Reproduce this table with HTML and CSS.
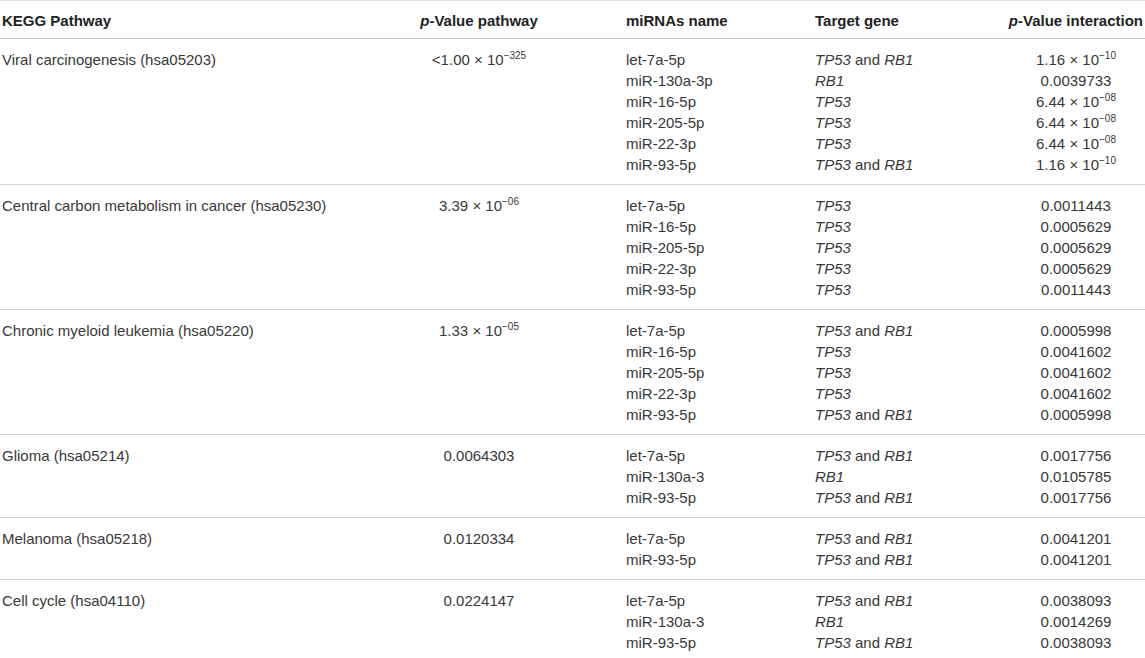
FILE: index.html
```html
<!DOCTYPE html>
<html>
<head>
<meta charset="utf-8">
<link rel="stylesheet" href="styles.css">
</head>
<body>
<table class="kegg">
  <colgroup>
    <col class="c1"><col class="c2"><col class="c3"><col class="c4"><col class="c5">
  </colgroup>
  <thead>
    <tr>
      <th class="left">KEGG Pathway</th>
      <th class="center"><i>p</i>-Value pathway</th>
      <th class="left">miRNAs name</th>
      <th class="left">Target gene</th>
      <th class="right"><i>p</i>-Value interaction</th>
    </tr>
  </thead>
  <tbody>
    <tr>
      <td>Viral carcinogenesis (hsa05203)</td>
      <td class="center">&lt;1.00 × 10<sup>−325</sup></td>
      <td>let-7a-5p<br>miR-130a-3p<br>miR-16-5p<br>miR-205-5p<br>miR-22-3p<br>miR-93-5p</td>
      <td><i>TP53</i> and <i>RB1</i><br><i>RB1</i><br><i>TP53</i><br><i>TP53</i><br><i>TP53</i><br><i>TP53</i> and <i>RB1</i></td>
      <td class="center">1.16 × 10<sup>−10</sup><br>0.0039733<br>6.44 × 10<sup>−08</sup><br>6.44 × 10<sup>−08</sup><br>6.44 × 10<sup>−08</sup><br>1.16 × 10<sup>−10</sup></td>
    </tr>
    <tr>
      <td>Central carbon metabolism in cancer (hsa05230)</td>
      <td class="center">3.39 × 10<sup>−06</sup></td>
      <td>let-7a-5p<br>miR-16-5p<br>miR-205-5p<br>miR-22-3p<br>miR-93-5p</td>
      <td><i>TP53</i><br><i>TP53</i><br><i>TP53</i><br><i>TP53</i><br><i>TP53</i></td>
      <td class="center">0.0011443<br>0.0005629<br>0.0005629<br>0.0005629<br>0.0011443</td>
    </tr>
    <tr>
      <td>Chronic myeloid leukemia (hsa05220)</td>
      <td class="center">1.33 × 10<sup>−05</sup></td>
      <td>let-7a-5p<br>miR-16-5p<br>miR-205-5p<br>miR-22-3p<br>miR-93-5p</td>
      <td><i>TP53</i> and <i>RB1</i><br><i>TP53</i><br><i>TP53</i><br><i>TP53</i><br><i>TP53</i> and <i>RB1</i></td>
      <td class="center">0.0005998<br>0.0041602<br>0.0041602<br>0.0041602<br>0.0005998</td>
    </tr>
    <tr>
      <td>Glioma (hsa05214)</td>
      <td class="center">0.0064303</td>
      <td>let-7a-5p<br>miR-130a-3<br>miR-93-5p</td>
      <td><i>TP53</i> and <i>RB1</i><br><i>RB1</i><br><i>TP53</i> and <i>RB1</i></td>
      <td class="center">0.0017756<br>0.0105785<br>0.0017756</td>
    </tr>
    <tr>
      <td>Melanoma (hsa05218)</td>
      <td class="center">0.0120334</td>
      <td>let-7a-5p<br>miR-93-5p</td>
      <td><i>TP53</i> and <i>RB1</i><br><i>TP53</i> and <i>RB1</i></td>
      <td class="center">0.0041201<br>0.0041201</td>
    </tr>
    <tr>
      <td>Cell cycle (hsa04110)</td>
      <td class="center">0.0224147</td>
      <td>let-7a-5p<br>miR-130a-3<br>miR-93-5p</td>
      <td><i>TP53</i> and <i>RB1</i><br><i>RB1</i><br><i>TP53</i> and <i>RB1</i></td>
      <td class="center">0.0038093<br>0.0014269<br>0.0038093</td>
    </tr>
  </tbody>
</table>
</body>
</html>
```

FILE: styles.css
```css
html, body {
  margin: 0;
  padding: 0;
  background: #ffffff;
  overflow: hidden;
}

.kegg {
  width: 1145px;
  border-collapse: collapse;
  table-layout: fixed;
  font-family: "Liberation Sans", Arial, sans-serif;
  font-size: 15px;
  line-height: 21px;
  color: #383838;
  border-top: 1px solid #e2e2e2;
}

.c1 { width: 336px; }
.c2 { width: 286px; }
.c3 { width: 189px; }
.c4 { width: 196px; }
.c5 { width: 138px; }

.kegg th {
  font-weight: bold;
  color: #222222;
  padding: 9px 4px 7px 4px;
  border-bottom: 1px solid #c4c4c4;
  white-space: nowrap;
}

.kegg th:first-child,
.kegg td:first-child {
  padding-left: 2px;
}

.kegg th.right {
  padding-right: 2px;
  padding-left: 0;
}

.kegg td {
  vertical-align: top;
  padding: 9.5px 4px;
  border-bottom: 1px solid #d2d2d2;
  white-space: nowrap;
}

.kegg td:last-child {
  padding-left: 0;
  padding-right: 0;
}

.left { text-align: left; }
.center { text-align: center; }
.right { text-align: right; }

.kegg sup {
  font-size: 10px;
  line-height: 0;
  vertical-align: 6px;
}

.kegg i {
  font-style: italic;
}
```
